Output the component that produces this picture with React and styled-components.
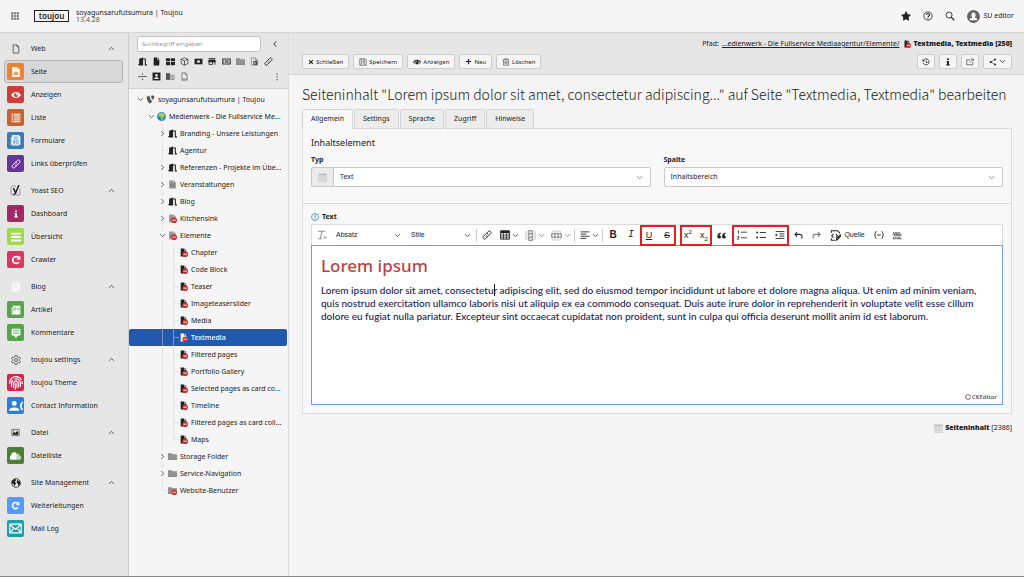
import React, { useState } from "react";
import styled, { createGlobalStyle, css } from "styled-components";
import { FaFingerprint, FaStar, FaTypo3 } from "react-icons/fa";
import { MdStore } from "react-icons/md";

const icons = {
  grid: <path d="M1 1h3v3H1zM6.500 1h3v3h-3zM12 1h3v3h-3zM1 6.500h3v3H1zM6.500 6.500h3v3h-3zM12 6.500h3v3h-3zM1 12h3v3H1zM6.500 12h3v3h-3zM12 12h3v3h-3z" fill="#bbb" stroke="#444" />,
  page: <path d="M3.500 1.500h6l3 3v10h-9zM9.500 1.500v3h3" fill="none" stroke="currentColor" />,
  pageFill: <path d="M3 1h6v4h4v10H3zM10 1l3 3h-3z" />,
  pageGray: <><path d="M2 1h7v4h5v10H2z" fill="#999" /><path d="M10 1l4 4h-4z" fill="#777" /><path d="M4 7h8M4 9.500h8M4 12h8" stroke="#666" /></>,
  pageContent: <><path d="M2 0h8l4 4v12H2z" /><path d="M4.500 7.500h7v6h-7z" fill="#f08234" opacity=".75" /><path d="M10 0v4h4z" fill="#f8c49b" /></>,
  eye: <><path d="M0 8c4-6.500 12-6.500 16 0-4 6.500-12 6.500-16 0z" /><circle cx="8" cy="8" r="3.400" fill="#cf3c3a" /><circle cx="9" cy="7" r="1.400" /></>,
  eyeDark: <><path d="M0 8.500C4 2 12 2 16 8.500c-4 5.500-12 5.500-16 0z" /><path d="M2 9c1.200-2 2-2.700 3-3-.8 4 0 5 1.500 6C4.500 11.500 3 10.500 2 9zM14 9c-1.200-2-2-2.700-3-3 .8 4 0 5-1.500 6 2-.5 3.500-1.500 4.500-3z" fill="#f5f5f5" /><circle cx="7" cy="6.500" r="1.200" fill="#f5f5f5" /></>,
  list: <><path d="M1 1h14v14H1z" opacity=".75" /><path d="M4 1v14M1 4.500h14M1 8h14M1 11.500h14" stroke="#c8632f" /></>,
  form: <><path d="M1 3h2v13h10v-1H1z" opacity=".7" /><path d="M3 0h10l2 3v11H3z" /><path d="M5 3h7M5 5.500h7M5 8h2v4H5zM9 8h3v4H9z" stroke="#3a7db4" fill="none" /></>,
  link: <path d="M7 5.500l3-3.200a2.500 2.500 0 0 1 3.700 3.500L10 9.600a2.500 2.500 0 0 1-3.600-.2M9 10.500l-3 3.200a2.500 2.500 0 0 1-3.700-3.500L6 6.400a2.500 2.500 0 0 1 3.600.2" fill="none" stroke="currentColor" strokeWidth="1.500" />,
  yoast: <><path d="M9 1.500H3.500a2 2 0 0 0-2 2v9a2 2 0 0 0 2 2h11V5" fill="none" stroke="#777" /><path d="M5 4.500l3 6.500M13 0L8.500 11c-.8 2-1.500 3-3.500 3" fill="none" stroke="#111" strokeWidth="2" /></>,
  info: <path d="M6 1h4v3H6zM5 6h5v6.500h1.500V15h-7v-2.500H6v-4H5z" />,
  bars: <path d="M0 1h16v3H0zM0 6.500h16v3H0zM0 12h16v3H0z" />,
  reload: <><path d="M12.500 11.500A5.500 5.500 0 1 1 12 4" fill="none" stroke="currentColor" strokeWidth="2.800" /><path d="M15 1v6.500H8.500z" /></>,
  blog: <><path d="M1 3l2-2h12v11l-2 3H1z" fill="#f8f8f8" /><path d="M4 6h6M4 9h6" stroke="#ddd" /></>,
  article: <><path d="M1 4h2V1h12v14H1z" /><path d="M5 4h3v4H5zM10 5h4M10 7h4M3 5v8" stroke="#57a44d" fill="none" /></>,
  comment: <><path d="M1 1h14v11h-4l-3 4-3-4H1z" /><path d="M3.500 4h9M3.500 6.500h9M3.500 9h9" stroke="#57a44d" /></>,
  contact: <><circle cx="6" cy="5" r="2.800" /><path d="M0 13.500c0-5 12-5 12 0z" /><path d="M15.800 3.500c-3 2.500-3 6.500 0 9" fill="none" stroke="currentColor" strokeWidth="2" /></>,
  gear: <><path d="M6.500 1h3l.5 2.200 1.400.8 2.100-.8 1.500 2.600L13.400 7.300v1.500l1.600 1.400-1.500 2.600-2.100-.7-1.400.8-.5 2.100h-3L6 12.900l-1.400-.8-2.100.7L1 10.200l1.600-1.400V7.300L1 5.800l1.500-2.600 2.100.8L6 3.200z" fill="none" stroke="currentColor" /><circle cx="8" cy="8" r="2.500" fill="none" stroke="currentColor" /></>,
  image: <><path d="M1.500 2.500h13v11h-13z" fill="none" stroke="currentColor" /><path d="M3 12V9l3-2 2 2 3-4 2 3v4z" /><circle cx="5" cy="5" r="1" /></>,
  cloud: <><path d="M1 13a3.500 3.500 0 0 1 .5-6A4 4 0 0 1 9 5v8z" /><path d="M9 5c2-.7 3.500.5 3.800 2.200A3 3 0 0 1 13 13H9z" opacity=".65" /></>,
  globe: <><circle cx="8" cy="8" r="7" fill="none" stroke="currentColor" strokeWidth="1.200" /><path d="M2 4l5-3 1 3-2 2 2 2-2 5-2-3-3-2zM10 3l4 2 1 4-3 4-1-4-2-2z" /></>,
  world: <><circle cx="8" cy="8" r="8" fill="#3f8fd6" /><path d="M3 3c3-3 9-2 11 2l-2 4h-2l-1 5-2-1V9L3 7z" fill="#a8cf3c" /><path d="M3 9l3 1v4l-3-2z" fill="#1d5fa0" /></>,
  mail: <path d="M1 2.500h14v11H1zM1 3l7 6 7-6M1 13.500l5-6M15 13.500l-5-6" fill="none" stroke="currentColor" strokeWidth="1.500" />,
  door: <><path d="M0 13h2V3l7-2v14H2v-1H0z" /><path d="M9 3.500h4V14h3" fill="none" stroke="currentColor" strokeWidth="1.900" /></>,
  tiles: <path d="M0 2h7v5.500H0zM8.500 2H16v5.500H8.500zM0 9h7v5.500H0zM8.500 9H16v5.500H8.500z" />,
  cube: <path d="M8 1.500l6 2.500v7.500l-6 3-6-3V4zM2 4l6 3 6-3M8 7v7.500" fill="none" stroke="currentColor" strokeWidth="1.200" />,
  block: <><path d="M1 3h14v10H1z" /><path d="M5.500 6h5v4h-5z" fill="#e6e6e6" /></>,
  film: <><path d="M.500 3.500h15v9H.500z" fill="none" stroke="currentColor" strokeWidth="1.500" /><path d="M3 4v8M13 4v8M6 6h1.500v4H6zM9 6h1.500v4H9z" stroke="currentColor" fill="none" /></>,
  folder: <><path d="M0 2h6l1.500 2H16v10H0z" fill="#8a8a8a" /><path d="M0 6h16M0 8.500h16M0 11h16" stroke="#a8a8a8" strokeWidth=".8" /></>,
  shortcut: <><path d="M2.500 1.500h7l4 4v9h-11zM9.500 1.500v4h4" fill="none" stroke="#666" /><path d="M6 7h7v7H6z" fill="#444" /><path d="M8 8.500l3 2-3 2z" fill="#fff" /></>,
  separator: <path d="M0 7h16v1.800H0zM7 2h2v3H7zM7 11h2v3H7z" fill="#666" />,
  person: <><path d="M1 1h14v14H1z" /><circle cx="8" cy="6" r="2.300" fill="#e6e6e6" /><path d="M3.500 12.500c1-4 8-4 9 0z" fill="#e6e6e6" /></>,
  building: <><path d="M0 2h7v12H0z" fill="#555" /><path d="M7.500 5.500h7v8h-7z" fill="none" stroke="#666" /><path d="M9 7.500h4M9 10h4M9 12h4" stroke="#666" /></>,
  pageFoot: <path d="M3.500 1.500h6l3 3v10h-9zM9.500 1.500v3h3M4 12.500h8" fill="none" stroke="#666" strokeWidth="1.300" />,
  dots: <path d="M7 1.500h2.200v2.200H7zM7 7h2.200v2.200H7zM7 12.500h2.200v2.200H7z" />,
  close: <path d="M3 3l10 10M13 3L3 13" stroke="currentColor" strokeWidth="3.200" />,
  save: <path d="M1.500 1.500h11l2 2v11h-13zM4.500 1.500v5h7v-5M4.500 14.500v-5h7v5M9.500 3v2" fill="none" stroke="currentColor" />,
  plus: <path d="M8 2v12M2 8h12" stroke="currentColor" strokeWidth="2.800" />,
  trash: <path d="M1.500 3.500h13M5.500 3.500v-2h5v2M3 4v10.500h10V4M6 6v6.500M8 6v6.500M10 6v6.500" fill="none" stroke="currentColor" />,
  help: <><circle cx="8" cy="8" r="6.700" fill="none" stroke="currentColor" strokeWidth="1.300" /><path d="M5.500 6.500C5.500 3 10.500 3.500 10.500 6.300 10.500 8 8 8 8 10M8 11v1.700" fill="none" stroke="currentColor" strokeWidth="1.700" /></>,
  search: <><circle cx="6.500" cy="6.500" r="4.800" fill="none" stroke="currentColor" strokeWidth="1.400" /><path d="M10 10l5 5" stroke="currentColor" strokeWidth="2" /></>,
  user: <><circle cx="8" cy="8" r="8" fill="#666" /><path d="M5.500 6c0-4 5-4 5 0 0 2-.8 2.800-1 3.500 2 .5 3 1 3.500 3H3c.5-2 1.500-2.500 3.500-3C6.300 8.800 5.500 8 5.500 6z" fill="#fff" /></>,
  history: <><path d="M3 4.500A6 6 0 1 1 2.500 10M8.500 5v4H11" fill="none" stroke="currentColor" strokeWidth="1.600" /><path d="M1 2v5h5z" /></>,
  external: <path d="M8 3.500H1.500v10h12V8M7.500 9L14 2.500M10 2h4.500v4.500" fill="none" stroke="currentColor" strokeWidth="1.200" />,
  share: <><circle cx="3.500" cy="8" r="2.200" /><circle cx="12" cy="3" r="2" /><circle cx="12" cy="13" r="2" /><path d="M12 3L3 8l9 5" fill="none" stroke="currentColor" /></>,
  content: <><path d="M.500.500h15v15H.500z" fill="#dedede" stroke="#c4c4c4" /><path d="M2 3h12" stroke="#aaa" strokeWidth="1.500" /><path d="M4 6.500h8M4 9h8M4 11.500h8" stroke="#cfcfcf" /></>,
  alert: <><circle cx="8" cy="8" r="7" fill="none" stroke="currentColor" strokeWidth="1.500" /><path d="M8 3.500v5.500M8 10.500v2" stroke="currentColor" strokeWidth="2" /></>,
  up: <path d="M2.500 11L8 5.500l5.500 5.500" fill="none" stroke="currentColor" strokeWidth="1.600" />,
  down: <path d="M2.500 5L8 10.500 13.500 5" fill="none" stroke="currentColor" strokeWidth="1.800" />,
  left: <path d="M10.500 2.500L5.500 8l5 5.500" fill="none" stroke="currentColor" strokeWidth="1.800" />,
  right: <path d="M5.500 2.500L10.500 8l-5 5.500" fill="none" stroke="currentColor" strokeWidth="1.800" />,
  removeFormat: <path d="M2 2h11M8 2L5.500 13M2 14h6M11 10l4 4M15 10l-4 4" fill="none" stroke="#888" strokeWidth="1.500" />,
  table: <><path d="M1 1.500h14v13H1z" fill="none" stroke="currentColor" strokeWidth="1.500" /><path d="M1 1h14v4H1z" /><path d="M1 8h14M1 11.300h14M5.500 3v12M10.500 3v12" stroke="currentColor" strokeWidth="1.200" /></>,
  column: <><path d="M1 2.500h14v11H1zM1 6h14M1 10h14" fill="none" stroke="#999" /><path d="M5.500.500h5v15h-5zM5.500 5.500h5M5.500 10.500h5" fill="none" stroke="#222" strokeWidth="1.300" /></>,
  row: <><path d="M2 1.500h12v13H2zM6 1.500v13M10 1.500v13" fill="none" stroke="#999" /><path d="M.500 5.500h15v5H.500zM5.500 5.500v5M10.500 5.500v5" fill="none" stroke="#222" strokeWidth="1.300" /></>,
  align: <path d="M1 3h14M1 6.500h9M1 10h14M1 13.500h9" stroke="currentColor" strokeWidth="1.400" />,
  quote: <path d="M6.500 2.500C3 3 .5 5.500.5 9.500c0 2.500 1.200 4 3.200 4s3.300-1.200 3.300-3-1.300-3-3-3c.3-1.500 1.300-2.500 3-3zM15 2.500c-3.500.5-6 3-6 7 0 2.500 1.200 4 3.200 4s3.300-1.200 3.300-3-1.300-3-3-3c.3-1.500 1.300-2.500 3-3z" />,
  numbered: <path d="M6 3.500h10M6 12.500h10M1 1.500h1.500V6M.500 10H3v2.300L.500 14.500h3" fill="none" stroke="currentColor" strokeWidth="1.300" />,
  bulleted: <><path d="M6 4h10M6 12h10" stroke="currentColor" strokeWidth="1.400" /><circle cx="1.800" cy="4" r="1.600" /><circle cx="1.800" cy="12" r="1.600" /></>,
  indent: <><path d="M1 2.500h14M7 6.200h8M7 9.800h8M1 13.500h14" stroke="currentColor" strokeWidth="1.400" /><path d="M1 5.500L4.500 8 1 10.500z" /></>,
  undo: <path d="M5.500 2L1.500 6l4 4M2 6h8c5 0 5.500 5 2.500 7" fill="none" stroke="currentColor" strokeWidth="1.800" />,
  redo: <path d="M10.500 2l4 4-4 4M14 6H6C1 6 .5 11 3.500 13" fill="none" stroke="currentColor" strokeWidth="1.800" />,
  source: <path d="M14 5V4l-3-3H2v3M2 12v3h5M5 6L2.500 8.500 5 11M8.500 6l2.500 2.500L8.500 11M9 15l1-2.500L15 7l1 1.500-5 5.500z" fill="none" stroke="currentColor" strokeWidth="1.500" />,
  softHyphen: <path d="M4 2C.5 5 .5 11 4 14M12 2c3.500 3 3.500 9 0 12M5 8h6" fill="none" stroke="currentColor" strokeWidth="1.500" />,
  whitespace: <path d="M1 2v4h3V2M6 2v4h3V2M11 2v4h4M1 8.500h14M1 11v3h3v-3M7 11v3h3v-3M12 11v3h3" fill="none" stroke="currentColor" strokeWidth="1.300" />,
  swirl: <><path d="M11 2.500A6.300 6.300 0 1 0 14 9" fill="none" stroke="#556" strokeWidth="2.500" /><path d="M10 1l5 2v5z" fill="#556" /></>,
};

const Icon = ({ name, size = 10 }) => (
  <Svg viewBox="0 0 16 16" width={size} height={size} fill="currentColor" aria-hidden="true">
    {icons[name]}
  </Svg>
);

const HiddenPage = ({ base = "pageFill", size = 9 }) => (
  <Svg viewBox="0 0 16 16" width={size} height={size} fill="currentColor" aria-hidden="true">
    {icons[base]}
    <circle cx="11" cy="11" r="5" fill="#d22f2f" />
    <path d="M8 11h6" stroke="#fff" strokeWidth="1.500" />
  </Svg>
);

const modules = [
  { title: "Web", icon: <Icon name="page" />, items: [
    ["Seite", "#f08234", <Icon name="pageContent" />],
    ["Anzeigen", "#cf3c3a", <Icon name="eye" />],
    ["Liste", "#c8632f", <Icon name="list" />],
    ["Formulare", "#3a7db4", <Icon name="form" size={11} />],
    ["Links überprüfen", "#663399", <Icon name="link" />],
  ] },
  { title: "Yoast SEO", icon: <Icon name="yoast" size={11} />, items: [
    ["Dashboard", "#a4276a", <Icon name="info" size={8} />],
    ["Übersicht", "#9fda4d", <Icon name="bars" />],
    ["Crawler", "#dc3763", <Icon name="reload" />],
  ] },
  { title: "Blog", icon: <Icon name="blog" />, items: [
    ["Artikel", "#57a44d", <Icon name="article" />],
    ["Kommentare", "#57a44d", <Icon name="comment" />],
  ] },
  { title: "toujou settings", icon: <Icon name="gear" />, items: [
    ["toujou Theme", "#d92050", <FaFingerprint size={14} />],
    ["Contact Information", "#2b7fd9", <Icon name="contact" size={14} />],
  ] },
  { title: "Datei", icon: <Icon name="image" size={9} />, items: [
    ["Dateiliste", "#4b7f38", <Icon name="cloud" size={12} />],
  ] },
  { title: "Site Management", icon: <Icon name="globe" />, items: [
    ["Weiterleitungen", "#5599ff", <Icon name="reload" size={9} />],
    ["Mail Log", "#1aa0aa", <Icon name="mail" size={13} />],
  ] },
];

const door = <Icon name="door" size={9} />;
const hidden = <HiddenPage />;

const tree = [
  { level: 0, label: "soyagunsarufutsumura | Toujou", icon: <FaTypo3 size={9} color="#555" />, toggle: "down" },
  { level: 1, label: "Medienwerk - Die Fullservice Me...", icon: <Icon name="world" size={9} />, toggle: "down" },
  { level: 2, label: "Branding - Unsere Leistungen", icon: door, toggle: "right" },
  { level: 2, label: "Agentur", icon: door },
  { level: 2, label: "Referenzen - Projekte im Übe...", icon: door, toggle: "right" },
  { level: 2, label: "Veranstaltungen", icon: <Icon name="pageGray" size={9} />, toggle: "right" },
  { level: 2, label: "Blog", icon: door, toggle: "right" },
  { level: 2, label: "Kitchensink", icon: <HiddenPage base="pageGray" />, toggle: "right" },
  { level: 2, label: "Elemente", icon: <HiddenPage base="pageGray" />, toggle: "down" },
  { level: 3, label: "Chapter", icon: hidden },
  { level: 3, label: "Code Block", icon: hidden },
  { level: 3, label: "Teaser", icon: hidden },
  { level: 3, label: "Imageteaserslider", icon: hidden },
  { level: 3, label: "Media", icon: hidden },
  { level: 3, label: "Textmedia", icon: hidden },
  { level: 3, label: "Filtered pages", icon: hidden },
  { level: 3, label: "Portfolio Gallery", icon: hidden },
  { level: 3, label: "Selected pages as card co...", icon: hidden },
  { level: 3, label: "Timeline", icon: hidden },
  { level: 3, label: "Filtered pages as card coll...", icon: hidden },
  { level: 3, label: "Maps", icon: hidden, last: true },
  { level: 2, label: "Storage Folder", icon: <Icon name="folder" size={9} />, toggle: "right" },
  { level: 2, label: "Service-Navigation", icon: <Icon name="folder" size={9} />, toggle: "right" },
  { level: 2, label: "Website-Benutzer", icon: <HiddenPage base="folder" />, last: true },
];

const pageTypes = [
  "door", "pageFill", "tiles", "cube", "block", "store", "film", "folder", "shortcut", "link",
  "separator", "person", "building", "pageFoot",
];

const tabs = ["Allgemein", "Settings", "Sprache", "Zugriff", "Hinweise"];

const App = () => {
  const [module, setModule] = useState("Seite");
  const [selected, setSelected] = useState("Textmedia");
  const [tab, setTab] = useState("Allgemein");

  return (
    <Page>
      <GlobalStyle />
      <Topbar>
        <PlainButton aria-label="Menü"><Icon name="grid" size={8} /></PlainButton>
        <Logo>toujou</Logo>
        <SiteName>
          <span>soyagunsarufutsumura | Toujou</span>
          <Version>13.4.28</Version>
        </SiteName>
        <UserTools>
          <PlainButton aria-label="Lesezeichen"><FaStar size={10} /></PlainButton>
          <PlainButton aria-label="Hilfe"><Icon name="help" /></PlainButton>
          <PlainButton aria-label="Suche"><Icon name="search" /></PlainButton>
          <PlainButton><Icon name="user" size={13} />SU editor</PlainButton>
        </UserTools>
      </Topbar>

      <Columns>
        <Modules>
          {modules.map((group) => (
            <div key={group.title}>
              <ModuleButton>
                <ModuleIcon>{group.icon}</ModuleIcon>
                <ModuleLabel>{group.title}</ModuleLabel>
                <Icon name="up" size={7} />
              </ModuleButton>
              {group.items.map(([label, color, icon]) => (
                <ModuleButton key={label} $active={module === label} onClick={() => setModule(label)}>
                  <ModuleIcon $color={color}>{icon}</ModuleIcon>
                  <ModuleLabel>{label}</ModuleLabel>
                </ModuleButton>
              ))}
            </div>
          ))}
        </Modules>

        <TreePane>
          <TreeHead>
            <SearchRow>
              <SearchInput placeholder="Suchbegriff eingeben" aria-label="Suchbegriff eingeben" />
              <PlainButton aria-label="Einklappen"><Icon name="left" size={8} /></PlainButton>
            </SearchRow>
            <TypeRow>
              <TypeIcons>
                {pageTypes.map((type) => (
                  <PlainButton key={type} aria-label={type}>
                    {type === "store" ? <MdStore size={11} /> : <Icon name={type} size={9} />}
                  </PlainButton>
                ))}
              </TypeIcons>
              <PlainButton aria-label="Mehr"><Icon name="dots" size={8} /></PlainButton>
            </TypeRow>
          </TreeHead>
          <Tree role="tree">
            {tree.map((node) => (
              <TreeRow
                key={node.label}
                role="treeitem"
                $active={selected === node.label}
                $level={Math.min(node.level, 2)}
                onClick={() => setSelected(node.label)}
              >
                {node.level === 3 && <Guide $through />}
                <Guide $through={node.level > 1 && !node.last} $leaf={!node.toggle}>
                  {node.toggle && <Icon name={node.toggle} size={7} />}
                </Guide>
                <NodeIcon>{node.icon}</NodeIcon>
                {node.label}
              </TreeRow>
            ))}
          </Tree>
        </TreePane>

        <Main>
          <DocHeader>
            <PathRow>
              <span>Pfad:</span>
              <PathLink href="#">...edienwerk - Die Fullservice Mediaagentur/Elemente/</PathLink>
              <HiddenPage size={8} />
              <RecordName>Textmedia, Textmedia [250]</RecordName>
            </PathRow>
            <ButtonRow>
              <DocButton><Icon name="close" size={6} />Schließen</DocButton>
              <DocButton><Icon name="save" size={8} />Speichern</DocButton>
              <DocButton><Icon name="eyeDark" size={8} />Anzeigen</DocButton>
              <DocButton><Icon name="plus" size={7} />Neu</DocButton>
              <DocButton><Icon name="trash" size={8} />Löschen</DocButton>
              <Spacer />
              <IconButton aria-label="Verlauf"><Icon name="history" size={8} /></IconButton>
              <IconButton aria-label="Info"><Icon name="info" size={8} /></IconButton>
              <IconButton aria-label="Neues Fenster"><Icon name="external" size={8} /></IconButton>
              <DocButton aria-label="Teilen"><Icon name="share" size={8} /><Icon name="down" size={7} /></DocButton>
            </ButtonRow>
          </DocHeader>

          <Body>
            <Title>Seiteninhalt "Lorem ipsum dolor sit amet, consectetur adipiscing..." auf Seite "Textmedia, Textmedia" bearbeiten</Title>
            <Tabs role="tablist">
              {tabs.map((name) => (
                <Tab key={name} role="tab" $active={tab === name} onClick={() => setTab(name)}>{name}</Tab>
              ))}
            </Tabs>
            <Panel>
              <Section>
                <SectionTitle>Inhaltselement</SectionTitle>
                <Fields>
                  <Field>
                    <Label htmlFor="type">Typ</Label>
                    <SelectBox>
                      <Addon><Icon name="content" size={9} /></Addon>
                      <Select id="type"><option>Text</option></Select>
                      <SelectArrow><Icon name="down" size={7} /></SelectArrow>
                    </SelectBox>
                  </Field>
                  <Field>
                    <Label htmlFor="column">Spalte</Label>
                    <SelectBox>
                      <Select id="column"><option>Inhaltsbereich</option></Select>
                      <SelectArrow><Icon name="down" size={7} /></SelectArrow>
                    </SelectBox>
                  </Field>
                </Fields>
              </Section>
              <EditorSection>
                <Label as="div" id="text-label"><Required><Icon name="alert" size={8} /></Required>Text</Label>
                <Toolbar role="toolbar">
                  <Tool aria-label="Formatierung entfernen"><Icon name="removeFormat" /></Tool>
                  <Dropdown $width={75}>Absatz<Icon name="down" size={7} /></Dropdown>
                  <Dropdown $width={70}>Stile<Icon name="down" size={7} /></Dropdown>
                  <Divider />
                  <Tool aria-label="Link"><Icon name="link" /></Tool>
                  <SplitTool aria-label="Tabelle"><Icon name="table" /><Icon name="down" size={7} /></SplitTool>
                  <SplitTool aria-label="Spalte" $muted><Icon name="column" size={11} /><Icon name="down" size={7} /></SplitTool>
                  <SplitTool aria-label="Zeile" $muted><Icon name="row" size={11} /><Icon name="down" size={7} /></SplitTool>
                  <Divider />
                  <SplitTool aria-label="Ausrichtung"><Icon name="align" /><Icon name="down" size={7} /></SplitTool>
                  <Divider />
                  <Tool><BoldGlyph>B</BoldGlyph></Tool>
                  <Tool><SerifGlyph as="i">I</SerifGlyph></Tool>
                  <Marked $width={36}>
                    <Tool><Glyph as="u">U</Glyph></Tool>
                    <Tool><Glyph as="s">S</Glyph></Tool>
                  </Marked>
                  <Marked $width={32} $space={4}>
                    <Tool><Glyph>x<sup>2</sup></Glyph></Tool>
                    <Tool><Glyph>x<sub>2</sub></Glyph></Tool>
                  </Marked>
                  <Tool aria-label="Zitat"><Icon name="quote" size={9} /></Tool>
                  <Marked $width={57} $space={2}>
                    <Tool aria-label="Nummerierte Liste"><Icon name="numbered" /></Tool>
                    <Tool aria-label="Liste"><Icon name="bulleted" /></Tool>
                    <Tool aria-label="Einzug"><Icon name="indent" /></Tool>
                  </Marked>
                  <Tool aria-label="Rückgängig"><Icon name="undo" size={9} /></Tool>
                  <Tool aria-label="Wiederholen" $muted><Icon name="redo" size={9} /></Tool>
                  <SourceTool><Icon name="source" size={11} />Quelle</SourceTool>
                  <Tool aria-label="Weiches Trennzeichen"><Icon name="softHyphen" /></Tool>
                  <Tool aria-label="Leerzeichen"><Icon name="whitespace" size={9} /></Tool>
                </Toolbar>
                <Editor role="textbox" aria-labelledby="text-label">
                  <EditorTitle>Lorem ipsum</EditorTitle>
                  <EditorText>
                    Lorem ipsum dolor sit amet, consectetu<Caret />r adipiscing elit, sed do eiusmod tempor incididunt ut labore et dolore magna aliqua. Ut enim ad minim veniam,<br />
                    quis nostrud exercitation ullamco laboris nisi ut aliquip ex ea commodo consequat. Duis aute irure dolor in reprehenderit in voluptate velit esse cillum<br />
                    dolore eu fugiat nulla pariatur. Excepteur sint occaecat cupidatat non proident, sunt in culpa qui officia deserunt mollit anim id est laborum.
                  </EditorText>
                  <PoweredBy><Icon name="swirl" size={6} />CKEditor</PoweredBy>
                </Editor>
              </EditorSection>
            </Panel>
            <RecordInfo><Icon name="content" size={9} /><span><RecordName>Seiteninhalt</RecordName> [2386]</span></RecordInfo>
          </Body>
        </Main>
      </Columns>
    </Page>
  );
};

export default App;

const GlobalStyle = createGlobalStyle`
  * {
    box-sizing: border-box;
  }
  body {
    margin: 0;
    font-family: "Noto Sans", sans-serif;
    font-size: 7px;
    line-height: 10px;
    color: #222;
    background: #f5f5f5;
  }
  button, input, select {
    font: inherit;
    color: inherit;
  }
`;

const Svg = styled.svg`
  display: block;
  flex: none;
`;

const Page = styled.div`
  min-height: 100vh;
  display: flex;
  flex-direction: column;
  border-bottom: 1px solid #888;
`;

const PlainButton = styled.button`
  display: flex;
  align-items: center;
  justify-content: center;
  gap: 4px;
  padding: 0;
  border: none;
  background: none;
  cursor: pointer;
`;

const Topbar = styled.header`
  display: flex;
  align-items: center;
  height: 33px;
  padding: 0 10px 0 11px;
  border-bottom: 1px solid #d6d6d6;
`;

const Logo = styled.div`
  margin: 0 7px 0 15px;
  width: 35px;
  height: 12px;
  border: 1px solid #222;
  font-size: 8px;
  line-height: 9px;
  font-weight: 600;
  text-align: center;
`;

const SiteName = styled.div`
  display: flex;
  flex-direction: column;
  line-height: 7px;
`;

const Version = styled.span`
  color: #555;
`;

const UserTools = styled.div`
  display: flex;
  align-items: center;
  gap: 12px;
  margin-left: auto;
`;

const Columns = styled.div`
  flex: 1;
  display: grid;
  grid-template-columns: 129px 160px minmax(0, 1fr);
`;

const Modules = styled.nav`
  display: flex;
  flex-direction: column;
  gap: 4px;
  padding: 4px 5px 0 4px;
  background: #e6e6e6;
  border-right: 1px solid #ccc;
`;

const ModuleButton = styled.button`
  display: flex;
  align-items: center;
  gap: 7px;
  width: 100%;
  height: 23px;
  padding: 0 7px 0 2px;
  border: 1px solid transparent;
  border-radius: 3px;
  background: none;
  text-align: left;
  cursor: pointer;
  ${({ $active }) => $active && css`
    background: #d8d8d8;
    border-color: #b4b4b4;
  `}
`;

const ModuleIcon = styled.span`
  display: flex;
  align-items: center;
  justify-content: center;
  width: 17px;
  height: 17px;
  border-radius: 2px;
  background: ${({ $color }) => $color || "none"};
  color: ${({ $color }) => ($color ? "#fff" : "#222")};
`;

const ModuleLabel = styled.span`
  flex: 1;
`;

const TreePane = styled.aside`
  border-right: 1px solid #dcdcdc;
`;

const TreeHead = styled.div`
  height: 56px;
  padding: 3px 9px 0 8px;
  background: #e6e6e6;
  border-bottom: 1px solid #d0d0d0;
`;

const SearchRow = styled.div`
  display: flex;
  justify-content: space-between;
`;

const SearchInput = styled.input`
  width: 124px;
  height: 16px;
  padding: 0 4px;
  border: 1px solid #c4c4c4;
  border-radius: 2px;
  background: #fff;
  font-size: 6px;
  &::placeholder {
    color: #999;
  }
`;

const TypeRow = styled.div`
  display: flex;
  align-items: flex-end;
  justify-content: space-between;
  margin-top: 4px;
`;

const TypeIcons = styled.div`
  display: grid;
  grid-template-columns: repeat(10, 10px);
  gap: 5px 4px;
  button {
    height: 10px;
  }
`;

const Tree = styled.div`
  padding-top: 2px;
`;

const TreeRow = styled.div`
  display: flex;
  align-items: center;
  height: 17px;
  margin-right: 1px;
  padding-left: ${({ $level }) => 6 + $level * 11}px;
  border-radius: 2px;
  white-space: nowrap;
  cursor: pointer;
  ${({ $active }) => $active && css`
    background: #2059ae;
    color: #fff;
    font-weight: 500;
  `}
`;

const line = "linear-gradient(#d4d4d480, #d4d4d480) no-repeat";

const Guide = styled.span`
  display: flex;
  align-items: center;
  justify-content: center;
  width: 11px;
  height: 17px;
  color: #333;
  background: ${({ $through, $leaf, children }) => [
    `${line} 5px 0 / 1px ${$leaf || !children ? 9 : 4}px`,
    $through && `${line} 5px 100% / 1px ${children ? 4 : 8}px`,
    $leaf && `${line} 6px 8px / 5px 1px`,
  ].filter(Boolean).join(", ")};
`;

const NodeIcon = styled.span`
  display: flex;
  width: 12px;
`;

const Main = styled.main`
  min-width: 0;
`;

const DocHeader = styled.div`
  height: 42px;
  padding: 6px 12px 0 13px;
  background: #e6e6e6;
  border-bottom: 1px solid #d6d6d6;
`;

const PathRow = styled.div`
  display: flex;
  justify-content: flex-end;
  align-items: center;
  gap: 3px;
`;

const PathLink = styled.a`
  color: inherit;
`;

const RecordName = styled.b`
  font-weight: 900;
`;

const ButtonRow = styled.div`
  display: flex;
  gap: 4px;
  margin-top: 5px;
`;

const Spacer = styled.div`
  flex: 1;
`;

const DocButton = styled.button`
  display: flex;
  align-items: center;
  gap: 2px;
  height: 15px;
  padding: 0 5px;
  border: 1px solid #ccc;
  border-radius: 2px;
  background: #f5f5f5;
  font-size: 6px;
  cursor: pointer;
`;

const IconButton = styled(DocButton)`
  padding: 0 4px;
`;

const Body = styled.div`
  padding: 9px 12px 0 13px;
`;

const Title = styled.h1`
  margin: 0 0 5px;
  font-family: "Noto Sans CJK SC", "Noto Sans", sans-serif;
  font-size: 14px;
  line-height: 20px;
  font-weight: 300;
  white-space: nowrap;
`;

const Tabs = styled.div`
  display: flex;
  gap: 1px;
`;

const Tab = styled.button`
  height: 20px;
  padding: 0 8px;
  margin-bottom: -1px;
  border: 1px solid #d4d4d4;
  border-radius: 2px 2px 0 0;
  background: #ececec;
  cursor: pointer;
  ${({ $active }) => $active && css`
    background: #f8f8f8;
    border-bottom-color: #f8f8f8;
  `}
`;

const Panel = styled.div`
  border: 1px solid #dcdcdc;
  background: #f8f8f8;
`;

const Section = styled.section`
  padding: 7px 8px 16px;
  border-bottom: 1px solid #dcdcdc;
`;

const SectionTitle = styled.h2`
  margin: 0 0 6px;
  font-size: 9px;
  line-height: 13px;
  font-weight: 400;
`;

const Fields = styled.div`
  display: grid;
  grid-template-columns: 1fr 1fr;
  gap: 13px;
`;

const Field = styled.div`
  display: flex;
  flex-direction: column;
`;

const Label = styled.label`
  display: flex;
  align-items: center;
  gap: 3px;
  margin-bottom: 2px;
  font-weight: 700;
`;

const SelectBox = styled.div`
  display: flex;
  height: 20px;
  border: 1px solid #c8c8c8;
  border-radius: 2px;
  background: #fff;
`;

const Addon = styled.span`
  display: flex;
  align-items: center;
  justify-content: center;
  width: 22px;
  border-right: 1px solid #c8c8c8;
  background: #ebebeb;
`;

const Select = styled.select`
  flex: 1;
  padding: 0 6px;
  border: none;
  outline: none;
  appearance: none;
  background: none;
`;

const SelectArrow = styled.span`
  display: flex;
  align-items: center;
  padding-right: 7px;
  color: #777;
  pointer-events: none;
`;

const EditorSection = styled.section`
  padding: 8px 8px;
`;

const Required = styled.span`
  color: #2f7fa5;
`;

const Toolbar = styled.div`
  display: flex;
  align-items: center;
  height: 21px;
  padding-left: 1px;
  border: 1px solid #dcdcdc;
  border-bottom: none;
  background: #fff;
  font-family: "Liberation Sans", Arial, sans-serif;
`;

const Tool = styled.button`
  display: flex;
  align-items: center;
  justify-content: center;
  width: 18px;
  height: 18px;
  padding: 0;
  border: none;
  background: none;
  cursor: pointer;
  opacity: ${({ $muted }) => ($muted ? 0.6 : 1)};
`;

const SplitTool = styled(Tool)`
  width: 26px;
  gap: 2px;
`;

const SourceTool = styled(Tool)`
  width: 45px;
  gap: 3px;
`;

const Dropdown = styled(Tool)`
  width: ${({ $width }) => $width}px;
  justify-content: space-between;
  padding: 0 5px;
`;

const Divider = styled.span`
  width: 1px;
  height: 13px;
  margin: 0 1px 0 0;
  background: #ccc;
`;

const Glyph = styled.span`
  font-size: 9px;
  line-height: 12px;
  sup, sub {
    font-size: 6px;
    line-height: 0;
  }
`;

const BoldGlyph = styled.b`
  font-size: 10px;
  line-height: 12px;
`;

const SerifGlyph = styled(Glyph)`
  font-family: "Liberation Mono", monospace;
  font-size: 10px;
`;

const Marked = styled.span`
  display: flex;
  align-items: center;
  width: ${({ $width }) => $width}px;
  height: 21px;
  margin-left: ${({ $space }) => $space || 0}px;
  outline: 2px solid #e81e1e;
  outline-offset: -2px;
  button {
    flex: 1;
  }
`;

const Editor = styled.div`
  display: flex;
  flex-direction: column;
  min-height: 160px;
  padding: 9px 5px 2px 9px;
  border: 1px solid #6c9cf5;
  background: #fff;
`;

const EditorTitle = styled.h2`
  margin: 0 0 7px;
  font-size: 17px;
  line-height: 22px;
  font-weight: 500;
  color: #bf3f46;
`;

const EditorText = styled.p`
  margin: 0;
  font-family: Lato, sans-serif;
  font-size: 10px;
  line-height: 13px;
  font-weight: 500;
  color: #1c1a55;
  white-space: nowrap;
`;

const Caret = styled.span`
  border-left: 1px solid #111;
  margin-right: -1px;
`;

const PoweredBy = styled.div`
  display: flex;
  align-items: center;
  gap: 1px;
  margin: auto 0 0 auto;
  font-size: 6px;
  font-weight: 600;
  color: #555;
`;

const RecordInfo = styled.div`
  display: flex;
  justify-content: flex-end;
  align-items: center;
  gap: 2px;
  margin-top: 9px;
`;
